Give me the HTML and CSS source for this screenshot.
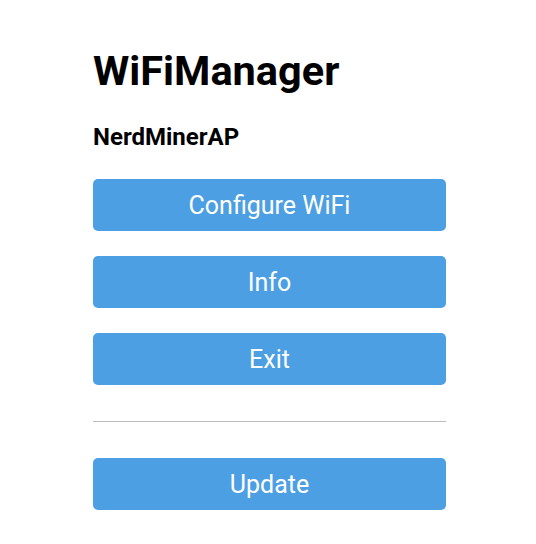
FILE: index.html
```html
<!DOCTYPE html>
<html>
<head>
<meta charset="utf-8">
<link rel="stylesheet" href="styles.css">
</head>
<body>
<div class="wrap">
  <h1 class="title">WiFiManager</h1>
  <h3 class="subtitle">NerdMinerAP</h3>
  <div class="buttons">
    <button class="btn">Configure WiFi</button>
    <button class="btn">Info</button>
    <button class="btn">Exit</button>
  </div>
  <hr class="divider">
  <button class="btn">Update</button>
</div>
</body>
</html>
```
FILE: styles.css
```css
html, body {
  margin: 0;
  padding: 0;
  background: #ffffff;
}
body {
  font-family: Roboto, "Liberation Sans", sans-serif;
  color: #000;
}
.wrap {
  width: 353px;
  margin: 0 auto;
  padding-top: 46px;
  padding-left: 3px;
  display: flex;
  flex-direction: column;
}
.title {
  margin: 0;
  font-size: 41.5px;
  font-weight: 700;
  line-height: 50px;
}
.subtitle {
  margin: 26px 0 0 0;
  font-size: 24px;
  font-weight: 700;
  line-height: 30px;
}
.buttons {
  margin-top: 27px;
  display: flex;
  flex-direction: column;
  gap: 25px;
}
.btn {
  display: block;
  width: 100%;
  height: 52px;
  border: 0;
  border-radius: 5px;
  background: #4d9fe3;
  color: #ffffff;
  font-family: Roboto, "Liberation Sans", sans-serif;
  font-size: 25px;
  padding: 0;
}
.divider {
  margin: 36px 0 36px 0;
  border: 0;
  border-top: 1px solid #bbbbbb;
  height: 0;
}
```
